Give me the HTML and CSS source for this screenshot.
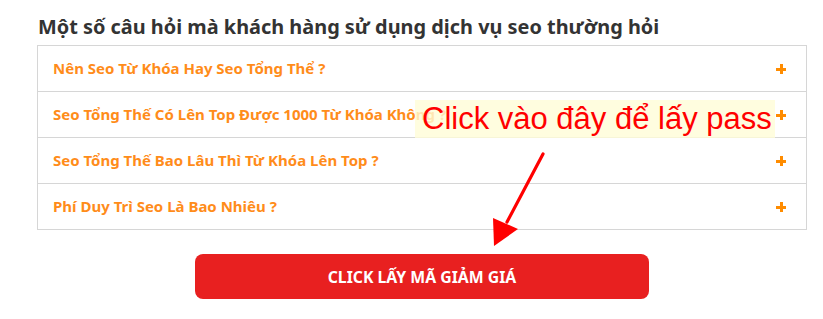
FILE: index.html
```html
<!DOCTYPE html>
<html>
<head>
  <title>Câu hỏi SEO</title>
  <link rel="stylesheet" href="styles.css">
</head>
<body>
  <div class="faq">
    <h3 class="faq-title">Một số câu hỏi mà khách hàng sử dụng dịch vụ seo thường hỏi</h3>

    <div class="faq-list">
      <div class="faq-item">
        <span class="faq-q">Nên Seo Từ Khóa Hay Seo Tổng Thể ?</span>
        <span class="plus"></span>
      </div>
      <div class="faq-item">
        <span class="faq-q">Seo Tổng Thế Có Lên Top Được 1000 Từ Khóa Không ?</span>
        <span class="plus"></span>
      </div>
      <div class="faq-item">
        <span class="faq-q">Seo Tổng Thế Bao Lâu Thì Từ Khóa Lên Top ?</span>
        <span class="plus"></span>
      </div>
      <div class="faq-item">
        <span class="faq-q">Phí Duy Trì Seo Là Bao Nhiêu ?</span>
        <span class="plus"></span>
      </div>
    </div>

    <div class="btn-row">
      <button class="btn-coupon">CLICK LẤY MÃ GIẢM GIÁ</button>
    </div>

    <!-- hint over the list -->
    <div class="hint">Click vào đây để lấy pass</div>
    <svg class="hint-arrow" width="60" height="100" viewBox="0 0 60 100">
      <line x1="53" y1="4" x2="17" y2="72" stroke="#ff0000" stroke-width="3.2" stroke-linecap="round"/>
      <polygon points="3,68 28,79 4,96" fill="#ff0000"/>
    </svg>
  </div>
</body>
</html>
```

FILE: styles.css
```css
body {
  margin: 0;
  padding: 0;
  background: #fff;
  font-family: "Noto Sans", "Open Sans", Arial, sans-serif;
}

.faq {
  position: relative;
  width: 770px;
  margin-left: 37px;
  padding-top: 13px;
}

.faq-title {
  margin: 0 0 5px 1px;
  font-size: 19.9px;
  font-weight: 700;
  line-height: 27px;
  color: #333;
}

.faq-list {
  border: 1px solid #d6d6d6;
  border-bottom: none;
}

.faq-item {
  display: flex;
  align-items: center;
  justify-content: space-between;
  height: 45px;
  padding: 0 20px 0 15px;
  border-bottom: 1px solid #d6d6d6;
}

.faq-q {
  color: #ff8c1a;
  font-size: 15px;
  font-weight: 700;
  margin-top: -2px;
}

.plus {
  position: relative;
  width: 10px;
  height: 10px;
}

.plus::before,
.plus::after {
  content: "";
  position: absolute;
  background: #ff8c00;
}

.plus::before {
  left: 0;
  top: 4px;
  width: 10px;
  height: 3px;
}

.plus::after {
  left: 4px;
  top: 0;
  width: 3px;
  height: 10px;
}

.btn-row {
  display: flex;
  padding-top: 24px;
  padding-left: 158px;
}

.btn-coupon {
  width: 454px;
  height: 45px;
  background: #e82020;
  color: #fff;
  border: none;
  border-radius: 8px;
  font-family: "Noto Sans", "Open Sans", Arial, sans-serif;
  font-size: 15.8px;
  font-weight: 700;
  cursor: pointer;
}

.hint {
  position: absolute;
  left: 378px;
  top: 100px;
  width: 360px;
  height: 38px;
  padding-left: 7px;
  box-sizing: border-box;
  background: rgba(255, 253, 215, 0.8);
  color: #ff0000;
  font-family: "Liberation Sans", Arial, sans-serif;
  font-size: 31px;
  line-height: 38px;
  white-space: nowrap;
}

.hint-arrow {
  position: absolute;
  left: 453px;
  top: 150px;
}
```
